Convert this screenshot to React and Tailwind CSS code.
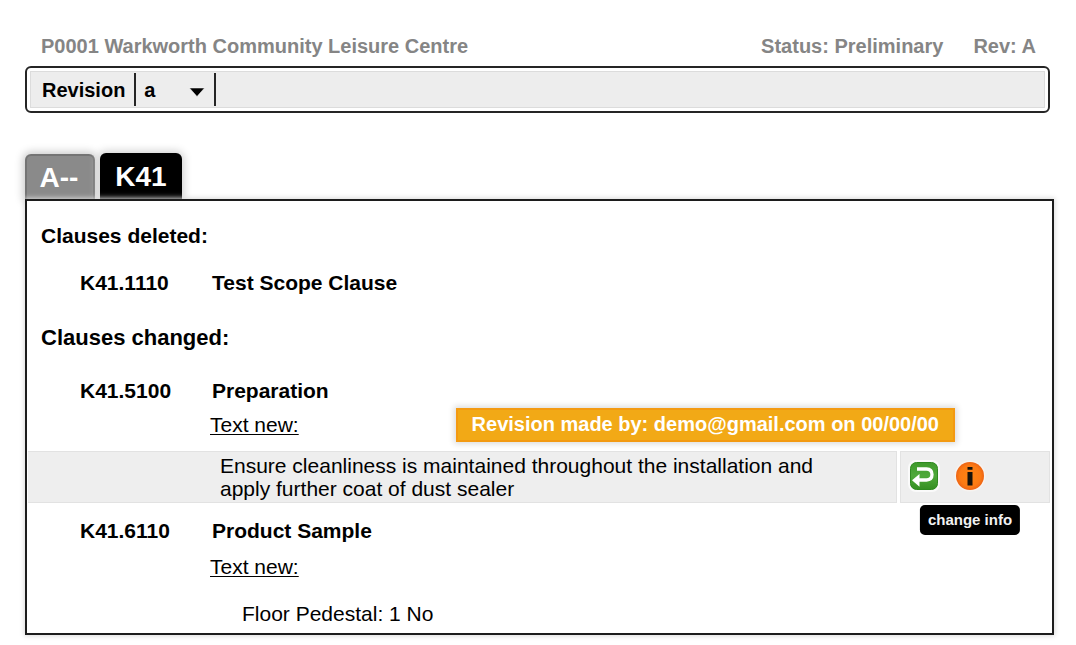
import { useState } from "react";

function UndoIcon() {
  return (
    <svg viewBox="0 0 32 32" className="size-8" aria-hidden="true">
      <defs>
        <linearGradient id="undo-fill" x1="0" y1="0" x2="0" y2="1">
          <stop offset="0" stopColor="#3f9a2c" />
          <stop offset="0.5" stopColor="#4fa93a" />
          <stop offset="1" stopColor="#358f22" />
        </linearGradient>
      </defs>
      <rect x="0" y="0" width="32" height="32" rx="8" fill="#fafafa" />
      <rect x="2.5" y="2.5" width="27" height="27" rx="6" fill="url(#undo-fill)" stroke="#2f8a20" strokeWidth="1" />
      <path d="M9 9H18.5Q24 9.2 24 14.5T18.5 20H10" fill="none" stroke="#fff" strokeWidth="3.3" />
      <path d="M4 20.2L11.5 14V26.8Z" fill="#fff" />
    </svg>
  );
}

function InfoIcon() {
  return (
    <svg viewBox="0 0 32 32" className="size-8" aria-hidden="true">
      <defs>
        <radialGradient id="info-fill">
          <stop offset="0" stopColor="#ff8412" />
          <stop offset="0.75" stopColor="#fb7a14" />
          <stop offset="1" stopColor="#ee6413" />
        </radialGradient>
      </defs>
      <circle cx="16" cy="16" r="15.5" fill="#f7f3f0" />
      <circle cx="16" cy="16" r="14" fill="url(#info-fill)" />
      <path d="M13.5 7H18.5V9.8H13.5ZM13.5 12H18.5V25.5H13.5Z" fill="#15120c" />
    </svg>
  );
}

function ClauseHeading({ code, title }) {
  return (
    <div className="flex pl-[53px]">
      <span className="w-[132px] shrink-0">{code}</span>
      <h3>{title}</h3>
    </div>
  );
}

export default function App() {
  const [revision, setRevision] = useState("a");

  return (
    <main className="bg-white pt-[34px] pr-[22px] pb-3 pl-[25px] font-['Liberation_Sans',Arial,sans-serif] text-[20px] leading-6 text-black">
      <header className="flex justify-between pr-[18px] pl-4 font-bold text-[#858585]">
        <h1>P0001 Warkworth Community Leisure Centre</h1>
        <div className="flex gap-[30px]">
          <span>Status: Preliminary</span>
          <span>Rev: A</span>
        </div>
      </header>

      <div className="mt-2 mr-1 rounded-md border-2 border-[#252525] bg-white p-[3px]">
        <div className="flex h-[37px] items-center border border-[#dcdcdc] bg-[#ededed] pl-[11px] font-bold">
          <label htmlFor="revision" className="pr-[9px]">Revision</label>
          <div className="relative h-[33px] w-[82px] border-x-2 border-[#252525]">
            <select
              id="revision"
              value={revision}
              onChange={(e) => setRevision(e.target.value)}
              className="h-full w-full appearance-none bg-transparent pl-2 font-bold"
            >
              <option value="a">a</option>
            </select>
            <svg viewBox="0 0 16 10" className="pointer-events-none absolute top-[14px] right-[9px] h-[10px] w-4" aria-hidden="true">
              <path d="M0.5 1H15.5L8 9.5Z" fill="#000" stroke="#fff" strokeWidth="0.5" />
            </svg>
          </div>
        </div>
      </div>

      <nav className="mt-10 flex items-end gap-[5px] text-[28px] font-bold text-white">
        <button type="button" className="h-[45px] w-[70px] rounded-t-md border-2 border-b-0 border-[#747474] bg-[#8a8a8a] pr-0.5 shadow-[0_0_8px_2px_#c8c8c8]">A--</button>
        <button type="button" aria-current="page" className="relative h-[46px] w-[82px] rounded-t-md bg-black pt-0.5 shadow-[0_0_8px_2px_#d0d0d0]">K41</button>
      </nav>

      <section className="relative border-2 border-[#1c1c1c] bg-white pt-[23px] pb-[7px] text-[21px] font-bold shadow-[0_0_5px_1px_#dadada]">
        <h2 className="pl-[14px]">Clauses deleted:</h2>
        <div className="mt-[23px]">
          <ClauseHeading code="K41.1110" title="Test Scope Clause" />
        </div>

        <h2 className="mt-[31px] pl-[14px] text-[22px]">Clauses changed:</h2>
        <div className="mt-[29px]">
          <ClauseHeading code="K41.5100" title="Preparation" />
        </div>
        <div className="mt-[5px] flex h-[34px] items-center justify-between pr-[97px] pl-[183px]">
          <span className="font-normal underline decoration-1 underline-offset-2">Text new:</span>
          <p className="border-2 border-[#f39a12] bg-[#f2a916] px-[14px] pt-0.5 pb-1 text-[20px] text-white shadow-[0_0_6px_2px_#dcdcdc]">
            Revision made by: demo@gmail.com on 00/00/00
          </p>
        </div>

        <div className="mt-[9px] flex gap-[3px] pr-0.5 pl-px font-normal">
          <p className="flex-1 border-y border-r border-[#e2e2e2] bg-[#eee] pt-0.5 pb-0.5 pl-[192px] leading-[23px]">
            Ensure cleanliness is maintained throughout the installation and
            <br />
            apply further coat of dust sealer
          </p>
          <div className="flex w-[150px] items-center gap-[14px] border border-[#e2e2e2] bg-[#eee] pb-0.5 pl-[7px]">
            <button type="button" aria-label="Undo change">
              <UndoIcon />
            </button>
            <div className="relative">
              <button type="button" aria-label="Information" aria-describedby="info-tip" className="block">
                <InfoIcon />
              </button>
              <span
                id="info-tip"
                role="tooltip"
                className="absolute top-full left-1/2 mt-[13px] -translate-x-1/2 rounded-[5px] bg-black px-2 py-[3px] text-[15px] leading-6 font-bold whitespace-nowrap text-[#f2f2f2]"
              >
                change info
              </span>
            </div>
          </div>
        </div>

        <div className="mt-4">
          <ClauseHeading code="K41.6110" title="Product Sample" />
        </div>
        <p className="mt-3 pl-[183px] font-normal underline decoration-1 underline-offset-2">Text new:</p>
        <p className="mt-[23px] pl-[215px] font-normal">Floor Pedestal: 1 No</p>
      </section>
    </main>
  );
}
